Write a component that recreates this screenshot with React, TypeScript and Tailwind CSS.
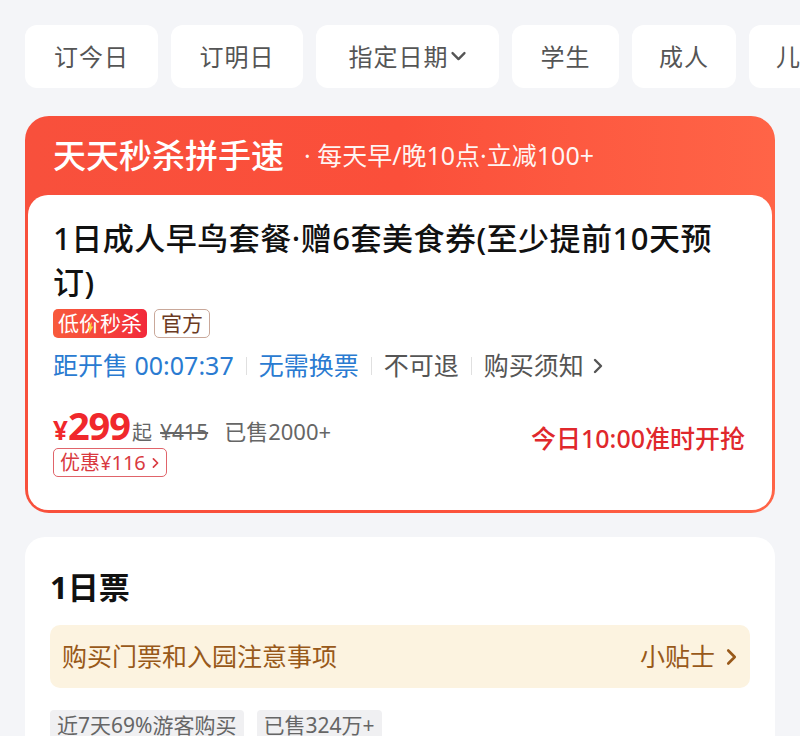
import React from 'react';

const font = { fontFamily: '"Noto Sans", "Noto Sans CJK SC", sans-serif' };

const Chevron = ({ className = '' }: { className?: string }) => (
  <svg viewBox="0 0 12 20" className={className} fill="none" stroke="currentColor" strokeWidth="2.4" strokeLinecap="round" strokeLinejoin="round">
    <path d="M3 4l6 6-6 6" />
  </svg>
);

const tabs = [
  { label: '订今日', w: 'w-[133px]' },
  { label: '订明日', w: 'w-[132px]' },
  { label: '指定日期', w: 'w-[183px]', down: true },
  { label: '学生', w: 'w-[107px]' },
  { label: '成人', w: 'w-[104px]' },
  { label: '儿童', w: 'w-[104px]' },
];

const Sep = () => <span className="mx-[12px] h-[18px] w-px bg-[#e0e0e0]" />;

export default function App() {
  return (
    <div className="h-[736px] w-[800px] overflow-hidden bg-[#f4f5f8] pt-[25px]" style={font}>
      {/* Filter tabs */}
      <div className="flex w-[800px] gap-[13px] overflow-hidden pl-[25px]">
        {tabs.map((t) => (
          <div
            key={t.label}
            className={`flex h-[63px] shrink-0 items-center justify-center overflow-hidden rounded-[12px] bg-white text-[24px] tracking-[1px] text-[#555] ${t.w}`}
          >
            {t.label}
            {t.down && (
              <svg viewBox="0 0 20 12" className="ml-[1px] h-[11px] w-[17px]" fill="none" stroke="currentColor" strokeWidth="2.8" strokeLinecap="round" strokeLinejoin="round">
                <path d="M3 2l7 7 7-7" />
              </svg>
            )}
          </div>
        ))}
      </div>

      {/* Flash sale card */}
      <div className="mx-[25px] mt-[28px] rounded-[24px] bg-gradient-to-r from-[#f8503c] via-[#fb4f3a] to-[#ff6447] px-[3px] pb-[3px]">
        <div className="flex h-[79px] items-center px-[25px] text-white">
          <span className="text-[33px] font-medium">天天秒杀拼手速</span>
          <span className="ml-[20px] text-[25px] text-white/95">· 每天早/晚10点·立减100+</span>
        </div>
        <div className="rounded-[20px] bg-white pb-[33px] pl-[25px] pr-[27px] pt-[21px]">
          <div className="max-w-[672px] text-[31px] font-medium leading-[44px] tracking-[0.5px] text-[#111]">
            1日成人早鸟套餐·赠6套美食券(至少提前10天预订)
          </div>
          <div className="mt-[5px] flex gap-[7px]">
            <span className="flex h-[29px] items-center rounded-[5px] bg-gradient-to-r from-[#f85a3c] to-[#f2283a] px-[5px] text-[21px] leading-none text-white">
              低
              <span className="relative">
                价
                <svg viewBox="0 0 10 16" className="absolute left-[8px] top-[9px] h-[12px] w-[7px]">
                  <path d="M6 0L1 9h3l-1 7 6-10H6l1-6z" fill="#ffd53a" />
                </svg>
              </span>
              秒杀
            </span>
            <span className="flex h-[29px] items-center rounded-[5px] border border-[#c9a89a] px-[6px] text-[21px] leading-none text-[#6b3a22]">
              官方
            </span>
          </div>
          <div className="mt-[13px] flex h-[30px] items-center text-[25px]">
            <span className="text-[#2a7bd1]">距开售 00:07:37</span>
            <Sep />
            <span className="text-[#2a7bd1]">无需换票</span>
            <Sep />
            <span className="text-[#555]">不可退</span>
            <Sep />
            <span className="flex items-center text-[#555]">
              购买须知
              <Chevron className="ml-[8px] h-[20px] w-[12px]" />
            </span>
          </div>
          <div className="mt-[22px] flex items-end justify-between">
            <div>
              <div className="flex h-[44px] items-baseline text-[#666]">
                <span className="text-[26px] font-bold text-[#f0282c]">¥</span>
                <span className="text-[38px] font-bold leading-[44px] tracking-[-1px] text-[#f0282c]">299</span>
                <span className="ml-[2px] text-[20px]">起</span>
                <span className="ml-[8px] text-[21px] line-through">¥415</span>
                <span className="ml-[16px] text-[22px]">已售2000+</span>
              </div>
              <div className="mt-[1px] inline-flex h-[29px] items-center rounded-[5px] border border-[#e0646a] px-[6px] text-[20px] text-[#d93a40]">
                优惠¥116
                <Chevron className="ml-[5px] h-[14px] w-[9px]" />
              </div>
            </div>
            <div className="mb-[20px] text-[25px] font-medium text-[#e0282c]">今日10:00准时开抢</div>
          </div>
        </div>
      </div>

      {/* Ticket section */}
      <div className="mx-[25px] mt-[24px] rounded-[20px] bg-white px-[25px] pb-[20px] pt-[28px]">
        <div className="text-[31px] font-bold leading-[44px] text-[#111]">1日票</div>
        <div className="mt-[16px] flex h-[63px] items-center justify-between rounded-[10px] bg-[#fcf3e0] pl-[12px] pr-[12px] text-[25px] text-[#98591a]">
          <span>购买门票和入园注意事项</span>
          <span className="flex items-center">
            小贴士
            <Chevron className="ml-[10px] h-[22px] w-[13px]" />
          </span>
        </div>
        <div className="mt-[22px] flex gap-[13px]">
          <span className="rounded-[4px] bg-[#f0f0f2] px-[7px] text-[21px] leading-[30px] text-[#666]">近7天69%游客购买</span>
          <span className="rounded-[4px] bg-[#f0f0f2] px-[7px] text-[21px] leading-[30px] text-[#666]">已售324万+</span>
        </div>
      </div>
    </div>
  );
}
